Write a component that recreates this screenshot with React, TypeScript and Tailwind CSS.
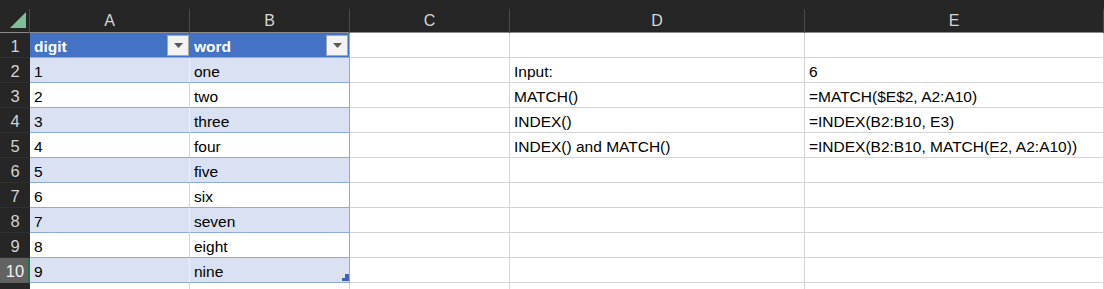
const COLS = ["A", "B", "C", "D", "E"];

const WORDS = ["one", "two", "three", "four", "five", "six", "seven", "eight", "nine"];

const SIDE: Record<number, [string, string]> = {
  2: ["Input:", "6"],
  3: ["MATCH()", "=MATCH($E$2, A2:A10)"],
  4: ["INDEX()", "=INDEX(B2:B10, E3)"],
  5: ["INDEX() and MATCH()", "=INDEX(B2:B10, MATCH(E2, A2:A10))"],
};

const grid = "grid grid-cols-[30px_160px_160px_160px_295px_1fr]";

function FilterButton() {
  return (
    <div className="mb-[1px] mr-[1px] grid h-[21px] w-[22px] place-items-center border border-[#a6a6a6] bg-[#f3f3f3]">
      <svg width="9" height="5" viewBox="0 0 9 5">
        <path d="M0 0h9L4.5 5z" fill="#5a5a5a" />
      </svg>
    </div>
  );
}

function RowHead({ n, active }: { n?: number; active?: boolean }) {
  return (
    <div
      className={`flex items-end justify-center border-b pb-[1px] text-[16.5px] leading-[20px] ${
        active
          ? "border-[#5f5f5f] bg-[#626262] text-[#f2f2f2] shadow-[inset_-2px_0_0_#217346]"
          : "border-[#2f2f2f] bg-[#262626] text-[#d4d4d4]"
      }`}
    >
      {n}
    </div>
  );
}

function Cell({ children, cls = "" }: { children?: React.ReactNode; cls?: string }) {
  return (
    <div className={`flex items-end overflow-hidden whitespace-nowrap border-b border-r pl-[4px] leading-[20px] ${cls}`}>
      {children}
    </div>
  );
}

export default function App() {
  return (
    <div className="h-[289px] w-[1104px] overflow-hidden bg-[#262626] text-[15.5px] text-black [font-family:'Liberation_Sans',Arial,sans-serif]">
      {/* column headers */}
      <div className={`${grid} h-[33px] border-b border-[#8c8c8c] pt-[9px]`}>
        <div className="relative border-r border-[#4a4a4a]">
          <svg className="absolute left-[10px] top-[3px]" width="16" height="16" viewBox="0 0 16 16">
            <path d="M16 0V16H0z" fill="#7fbf98" />
          </svg>
        </div>
        {COLS.map((c) => (
          <div key={c} className="flex items-center justify-center border-r border-[#4a4a4a] pb-[1px] text-[16px] text-[#d6d6d6]">
            {c}
          </div>
        ))}
      </div>

      {/* row 1: table header */}
      <div className={`${grid} h-[25px] bg-white`}>
        <RowHead n={1} />
        <div className="flex items-end justify-between border-b border-[#8ea9db] bg-[#4472c4] pl-[4px] font-bold leading-[20px] text-white">
          digit
          <FilterButton />
        </div>
        <div className="flex items-end justify-between border-b border-r border-[#8ea9db] bg-[#4472c4] pl-[4px] font-bold leading-[20px] text-white">
          word
          <FilterButton />
        </div>
        <Cell cls="border-[#d4d4d4]" />
        <Cell cls="border-[#d4d4d4]" />
        <Cell cls="border-[#d4d4d4]" />
      </div>

      {/* data rows */}
      {WORDS.map((w, i) => {
        const row = i + 2;
        const band = i % 2 === 0;
        const side = SIDE[row];
        const fill = band ? "bg-[#d9e1f2]" : "bg-white";
        return (
          <div key={w} className={`${grid} h-[25px] bg-white`}>
            <RowHead n={row} active={row === 10} />
            <Cell cls={`${fill} border-b-[#8ea9db] ${band ? "border-r-[#eef2f9]" : "border-r-[#d4d4d4]"}`}>{i + 1}</Cell>
            <Cell cls={`relative ${fill} border-[#8ea9db]`}>
              {w}
              {row === 10 && (
                <svg className="absolute bottom-[1px] right-0" width="7" height="7" viewBox="0 0 7 7">
                  <path d="M7 0V7H0V4H3V0z" fill="#4460b4" />
                </svg>
              )}
            </Cell>
            <Cell cls="border-[#d4d4d4]" />
            <Cell cls="border-[#d4d4d4]">{side?.[0]}</Cell>
            <Cell cls="border-[#d4d4d4]">{side?.[1]}</Cell>
          </div>
        );
      })}

      {/* partial row 11 */}
      <div className={`${grid} h-[25px] bg-white`}>
        <RowHead />
        <Cell cls="border-[#d4d4d4]" />
        <Cell cls="border-[#d4d4d4]" />
        <Cell cls="border-[#d4d4d4]" />
        <Cell cls="border-[#d4d4d4]" />
        <Cell cls="border-[#d4d4d4]" />
      </div>
    </div>
  );
}
